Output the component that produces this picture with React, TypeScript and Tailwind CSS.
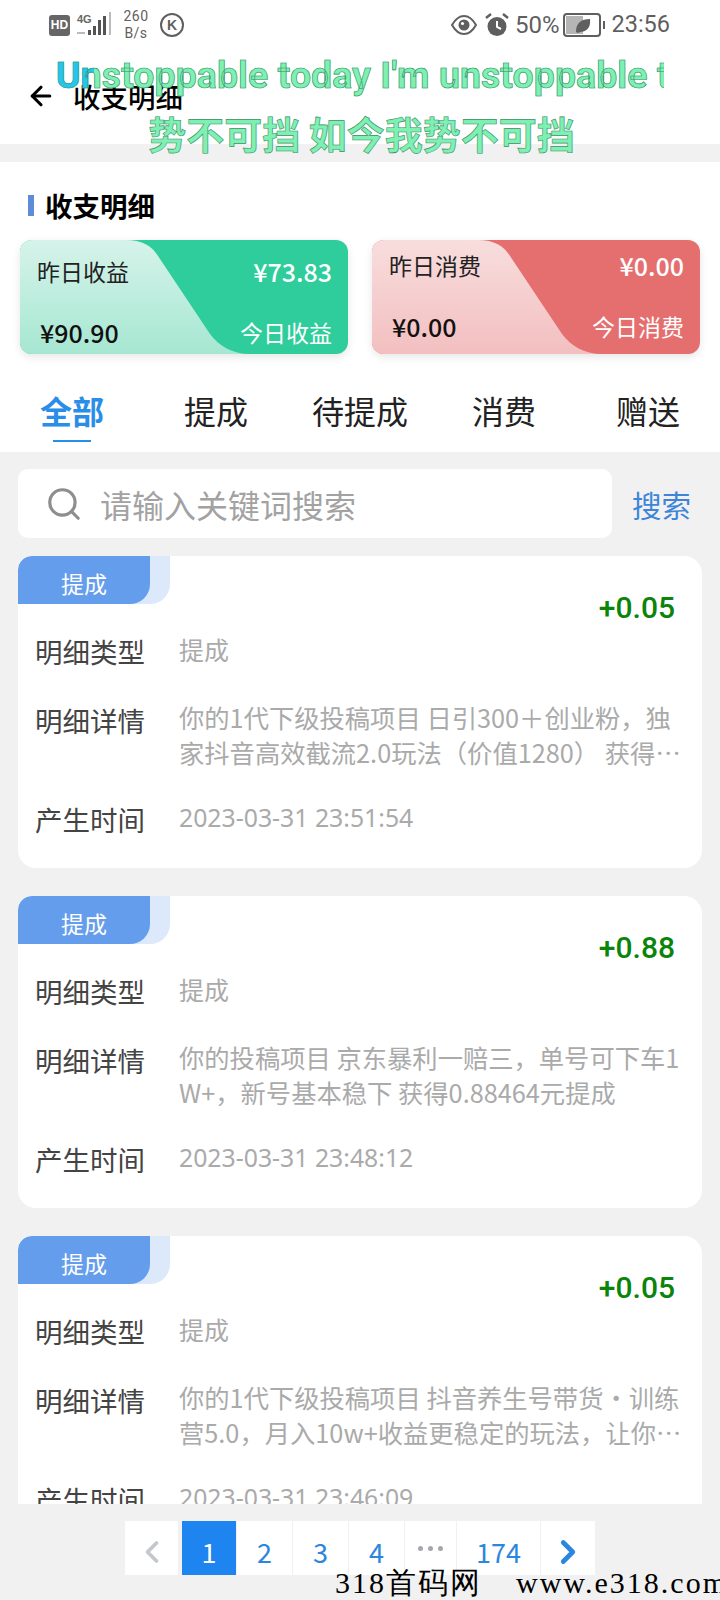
import React from 'react';
import { ArrowLeft, ChevronLeft, ChevronRight, Search } from 'lucide-react';

const cjk = "font-['Noto_Sans_CJK_SC','Noto_Sans',sans-serif]";

const tabs = ['全部', '提成', '待提成', '消费', '赠送'];

const records = [
  {
    amount: '+0.05',
    detail: ['你的1代下级投稿项目 日引300＋创业粉，独', '家抖音高效截流2.0玩法（价值1280） 获得…'],
    time: '2023-03-31 23:51:54',
  },
  {
    amount: '+0.88',
    detail: ['你的投稿项目 京东暴利一赔三，单号可下车1', 'W+，新号基本稳下 获得0.88464元提成'],
    time: '2023-03-31 23:48:12',
  },
  {
    amount: '+0.05',
    detail: ['你的1代下级投稿项目 抖音养生号带货・训练', '营5.0，月入10w+收益更稳定的玩法，让你…'],
    time: '2023-03-31 23:46:09',
  },
];

function StatusBar() {
  return (
    <div className="h-[50px] flex items-center justify-between pl-[49px] pr-[50px] text-[#5f5f5f]">
      <div className="flex items-center">
        <div className="w-[21px] h-[21px] rounded-[3px] bg-[#666] text-white text-[12px] font-bold leading-[21px] text-center font-['Liberation_Sans',sans-serif]">HD</div>
        <svg width="38" height="28" viewBox="0 0 38 28" className="ml-[6px]">
          <text x="1" y="12" fontSize="11" fontWeight="700" fill="#666" fontFamily="Liberation Sans">4G</text>
          <rect x="1" y="21" width="8" height="2" fill="#bbb" />
          <rect x="12" y="19" width="3" height="5" fill="#555" />
          <rect x="17" y="15" width="3" height="9" fill="#555" />
          <rect x="22" y="9" width="3" height="15" fill="#555" />
          <rect x="27" y="5" width="3" height="19" fill="#555" />
          <rect x="33" y="1" width="2" height="23" fill="#bbb" />
        </svg>
        <div className="ml-[7px] w-[30px] text-center text-[14px] leading-[17px] tracking-[0.5px] font-['Roboto',sans-serif]">
          <div>260</div>
          <div>B/s</div>
        </div>
        <div className="ml-[9px] w-[24px] h-[24px] rounded-full border-2 border-[#5f5f5f] text-[14px] font-bold leading-[20px] text-center font-['Liberation_Sans',sans-serif]">K</div>
      </div>
      <div className="flex items-center">
        <svg width="26" height="20" viewBox="0 0 26 20">
          <path d="M1 10C5 3 9 1 13 1s8 2 12 9c-4 7-8 9-12 9S5 17 1 10Z" fill="none" stroke="#5f5f5f" strokeWidth="2" />
          <circle cx="13" cy="10" r="5.5" fill="#5f5f5f" />
          <circle cx="11.5" cy="8.5" r="1.6" fill="#fff" />
        </svg>
        <svg width="26" height="26" viewBox="0 0 26 26" className="ml-[7px]">
          <circle cx="13" cy="14.5" r="9.5" fill="#5f5f5f" />
          <path d="M13 9v6l4 2" fill="none" stroke="#fff" strokeWidth="2" />
          <path d="M2 6l5-4M24 6l-5-4" stroke="#5f5f5f" strokeWidth="2.5" />
        </svg>
        <span className="ml-[5px] text-[24px] leading-none font-['Roboto',sans-serif]">50%</span>
        <svg width="43" height="24" viewBox="0 0 43 24" className="ml-[4px]">
          <rect x="1" y="1" width="36" height="22" rx="3" fill="#fff" stroke="#5f5f5f" strokeWidth="2" />
          <rect x="3" y="3" width="17" height="18" fill="#b5b5b5" />
          <path d="M13 19C13 10 18 6 27 6c1 8-3 13-10 13l-2 1Z" fill="#5f5f5f" />
          <rect x="40" y="8" width="2" height="8" fill="#5f5f5f" />
        </svg>
        <span className="ml-[5px] text-[23.5px] leading-none font-['Roboto',sans-serif]">23:56</span>
      </div>
    </div>
  );
}

function SummaryCard({ dark, from, to, id, title, value, total, today, offset }: { dark: string; from: string; to: string; id: string; title: string; value: string; total: string; today: string; offset: boolean }) {
  return (
    <div className={`relative w-[328px] h-[114px] rounded-[12px] overflow-hidden shadow-[0_3px_8px_rgba(0,0,0,0.1)] ${dark}`}>
      <svg width="328" height="114" viewBox="0 0 328 114" className="absolute inset-0">
        <defs>
          <linearGradient id={id} x1="0" y1="0" x2="0" y2="1">
            <stop offset="0" stopColor={from} />
            <stop offset="1" stopColor={to} />
          </linearGradient>
        </defs>
        <path d="M0 0H106C122 0 132 6 138 16L190 94C199 106 212 114 230 114H0Z" fill={`url(#${id})`} />
      </svg>
      <div className="relative h-full flex flex-col justify-between pl-[17px] pr-[16px] pb-[4px]">
        <div className={`flex justify-between items-center ${offset ? 'pt-[7px]' : 'pt-[13px]'}`}>
          <span className="text-[23px] leading-[36px] text-[#222]">{title}</span>
          <span className="text-[25px] leading-[36px] font-medium text-white">¥{value}</span>
        </div>
        <div className={`flex justify-between items-center ${offset ? 'pb-[6px]' : 'pb-0'}`}>
          <span className="text-[25px] leading-[36px] font-medium text-[#111] pl-[3px]">¥{total}</span>
          <span className="text-[23px] leading-[36px] text-white">{today}</span>
        </div>
      </div>
    </div>
  );
}

function RecordCard({ amount, detail, time }: { amount: string; detail: string[]; time: string }) {
  return (
    <div className="shrink-0 h-[312px] rounded-[18px] rounded-tl-[14px] bg-white overflow-hidden">
      <div className="flex justify-between">
        <div className="w-[152px] h-[48px] rounded-br-[20px] bg-[#dce9fa]">
          <div className="w-[132px] h-[48px] rounded-br-[20px] rounded-tl-[14px] bg-[#659ded] text-white text-[23px] leading-[54px] text-center">提成</div>
        </div>
        <div className="pt-[30px] pr-[27px] text-[30px] leading-[44px] font-medium text-[#0a840a] font-['Roboto',sans-serif]">{amount}</div>
      </div>
      <div className="flex pl-[17px] mt-[1px] h-[40px]">
        <div className="w-[144px] text-[27.5px] leading-[40px] text-[#444]">明细类型</div>
        <div className="text-[25px] leading-[36px] text-[#aaa]">提成</div>
      </div>
      <div className="flex pl-[17px] pr-[18px] mt-[29px]">
        <div className="w-[144px] shrink-0 text-[27.5px] leading-[40px] text-[#444]">明细详情</div>
        <div className="text-[25.3px] leading-[35px] text-[#aaa] whitespace-nowrap">
          {detail.map((line) => (
            <div key={line}>{line}</div>
          ))}
        </div>
      </div>
      <div className="flex pl-[17px] mt-[29px]">
        <div className="w-[144px] text-[27.5px] leading-[40px] text-[#444]">产生时间</div>
        <div className="text-[24.8px] leading-[36px] text-[#aaa] font-['Noto_Sans',sans-serif]">{time}</div>
      </div>
    </div>
  );
}

function Pagination() {
  const cell = 'h-[54px] flex items-center justify-center text-[27px] pt-[8px]';
  return (
    <div className="flex justify-center gap-[1px] h-[54px]">
      <div className={`${cell} w-[53px] mr-[3px] bg-white text-[#c4c8cc]`}>
        <ChevronLeft size={36} strokeWidth={2.5} />
      </div>
      <div className={`${cell} w-[54px] bg-[#1e84f0] text-white`}>1</div>
      <div className={`${cell} w-[55px] bg-white text-[#2b86e0]`}>2</div>
      <div className={`${cell} w-[55px] bg-white text-[#2b86e0]`}>3</div>
      <div className={`${cell} w-[55px] bg-white text-[#2b86e0]`}>4</div>
      <div className="h-[54px] w-[51px] bg-white flex items-center justify-center gap-[5px]">
        <div className="w-[5px] h-[5px] rounded-full bg-[#a4a8ac]" />
        <div className="w-[5px] h-[5px] rounded-full bg-[#a4a8ac]" />
        <div className="w-[5px] h-[5px] rounded-full bg-[#a4a8ac]" />
      </div>
      <div className={`${cell} w-[83px] bg-white text-[#2b86e0]`}>174</div>
      <div className={`${cell} w-[54px] bg-white text-[#2b86e0]`}>
        <ChevronRight size={38} strokeWidth={3} />
      </div>
    </div>
  );
}

export default function App() {
  return (
    <div className={`relative w-[720px] h-[1600px] overflow-hidden bg-[#f1f1f1] ${cjk}`}>
      {/* Top bar */}
      <div className="h-[144px] bg-white">
        <StatusBar />
        <div className="flex items-center pl-[26px] pt-[26px]">
          <ArrowLeft size={30} strokeWidth={2.5} className="text-black" />
          <span className="ml-[17px] text-[27.5px] leading-[40px] font-medium text-black">收支明细</span>
        </div>
      </div>

      {/* Summary */}
      <div className="mt-[18px] h-[290px] bg-white">
        <div className="flex items-center pl-[28px] pt-[8px] h-[78px]">
          <div className="w-[6px] h-[21px] bg-[#5d8cd8]" />
          <span className="ml-[11px] text-[27.5px] leading-[40px] font-bold text-black">收支明细</span>
        </div>
        <div className="flex justify-between pl-[20px] pr-[20px]">
          <SummaryCard dark="bg-[#2ecd9b]" from="#d6f3ea" to="#a6e7d2" id="green" title="昨日收益" value="73.83" total="90.90" today="今日收益" offset={false} />
          <SummaryCard dark="bg-[#e56f6f]" from="#f8dddd" to="#f3bfc0" id="red" title="昨日消费" value="0.00" total="0.00" today="今日消费" offset={true} />
        </div>
        <div className="grid grid-cols-5 mt-[32px]">
          {tabs.map((tab, i) => (
            <div key={tab} className="flex flex-col items-center">
              <span className={`text-[32px] leading-[48px] ${i === 0 ? 'font-bold text-[#2a8de8]' : 'text-[#222]'}`}>{tab}</span>
              {i === 0 && <div className="w-[38px] h-[2px] mt-[6px] bg-[#2a8de8]" />}
            </div>
          ))}
        </div>
      </div>

      {/* Search */}
      <div className="flex items-center pl-[18px] pr-[18px] pt-[17px]">
        <div className="flex items-center w-[594px] h-[69px] rounded-[10px] bg-white pl-[27px]">
          <Search size={38} strokeWidth={2} className="text-[#8e8e8e]" />
          <span className="ml-[17px] text-[32px] leading-[46px] text-[#a2a2a2]">请输入关键词搜索</span>
        </div>
        <span className="ml-[20px] text-[29.5px] leading-[44px] text-[#3d85d8]">搜索</span>
      </div>

      {/* Records */}
      <div className="h-[948px] mx-[18px] mt-[18px] overflow-hidden flex flex-col gap-[28px]">
        {records.map((r) => (
          <RecordCard key={r.time} amount={r.amount} detail={r.detail} time={r.time} />
        ))}
      </div>

      <div className="mt-[17px]">
        <Pagination />
      </div>

      {/* Lyric overlay */}
      <div className="absolute left-[56px] top-[50px] w-[608px] overflow-hidden font-['Roboto',sans-serif] text-[37.6px] leading-[50px] font-bold whitespace-nowrap">
        <div className="bg-[linear-gradient(90deg,#22c6ee_0,#22c6ee_38px,#7df0b2_38px)] bg-clip-text text-transparent [-webkit-text-stroke:0.6px_#3a8f68]">Unstoppable today I'm unstoppable today</div>
      </div>
      <div className={`absolute left-0 right-0 top-[106px] pl-[3px] text-center text-[38px] leading-[54px] font-bold text-[#7df0b2] [-webkit-text-stroke:0.6px_#3a8f68] ${cjk}`}>势不可挡 如今我势不可挡</div>

      {/* Site watermark */}
      <div className="absolute left-[335px] bottom-[-3px] whitespace-nowrap font-['Liberation_Serif',serif] text-[30px] leading-[40px] text-black tracking-[2px]">318首码网<span className="ml-[34px]">www.e318.com</span></div>
    </div>
  );
}
